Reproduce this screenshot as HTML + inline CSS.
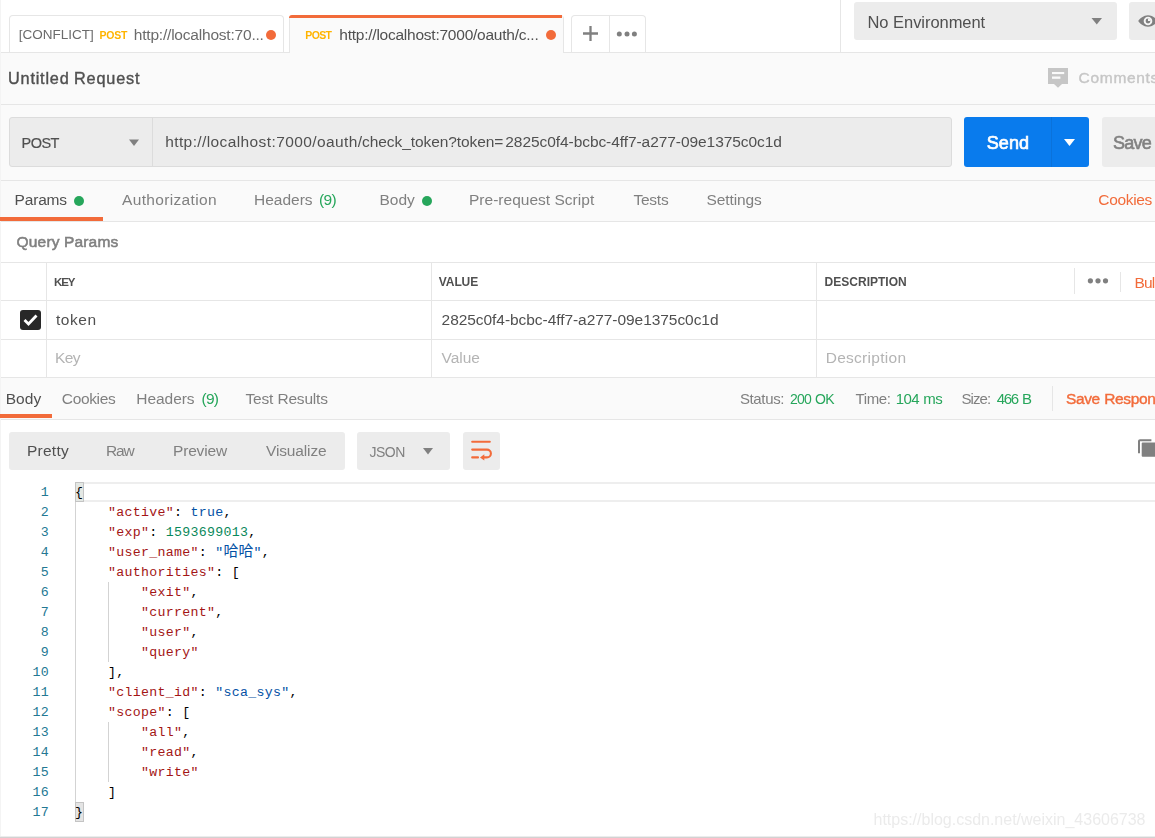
<!DOCTYPE html>
<html lang="en">
<head>
<meta charset="utf-8">
<title>Postman</title>
<style>
html,body{margin:0;padding:0;}
body{width:1155px;height:838px;overflow:hidden;position:relative;background:#fff;font-family:"Liberation Sans","Noto Sans CJK SC",sans-serif;color:#505050;font-size:15px;}
.abs{position:absolute;}
.t{position:absolute;white-space:nowrap;line-height:20px;height:20px;}
.box{position:absolute;box-sizing:border-box;}
.hl{position:absolute;height:1px;background:#e6e6e6;left:0;width:1155px;}
.vl{position:absolute;width:1px;background:#e6e6e6;}
.mono{position:absolute;left:0;top:0.5px;font-family:"Liberation Mono","Noto Sans CJK SC",monospace;font-size:13.25px;letter-spacing:0.3px;}
.ln{position:absolute;left:0;width:49px;text-align:right;color:#237893;height:20px;line-height:20px;white-space:pre;}
.cl{position:absolute;left:75px;height:20px;line-height:20px;white-space:pre;color:#000;}
.k{color:#a31515;}
.s{color:#0451a5;}
.n{color:#09885a;}
</style>
</head>
<body>

<!-- ===== top tab bar ===== -->
<div class="hl" style="top:52px;"></div>
<div class="box" style="left:0;top:53px;width:1155px;height:51px;background:#fafafa;"></div>
<div class="hl" style="top:104px;"></div>

<!-- tab 1 -->
<div class="box" style="left:9px;top:15px;width:275px;height:37px;border:1px solid #e6e6e6;border-bottom:none;border-radius:4px 4px 0 0;background:#fff;"></div>
<div class="box" style="left:266px;top:30px;width:10px;height:10px;border-radius:5px;background:#f26b3a;"></div>

<!-- tab 2 (active) -->
<div class="box" style="left:289px;top:15px;width:275px;height:38px;border:1px solid #e6e6e6;border-top:none;border-bottom:none;border-radius:4px 4px 0 0;background:#fafafa;"></div>
<div class="box" style="left:289px;top:15px;width:273px;height:3px;border-radius:3px 0 0 0;background:#f26b3a;"></div>
<div class="box" style="left:546px;top:30px;width:10px;height:10px;border-radius:5px;background:#f26b3a;"></div>

<!-- plus / more -->
<div class="box" style="left:571px;top:15px;width:75px;height:37px;border:1px solid #e6e6e6;border-bottom:none;border-radius:4px 4px 0 0;background:#fff;"></div>
<div class="vl" style="left:609px;top:16px;height:36px;"></div>
<svg class="abs" style="left:582px;top:25px;" width="17" height="17" viewBox="0 0 17 17"><path d="M8.500 1v15M1 8.500h15" stroke="#808080" stroke-width="2.300" fill="none"/></svg>
<svg class="abs" style="left:615px;top:30px;" width="24" height="8" viewBox="0 0 24 8"><circle cx="4.300" cy="4" r="2.500" fill="#808080"/><circle cx="12" cy="4" r="2.500" fill="#808080"/><circle cx="19.400" cy="4" r="2.500" fill="#808080"/></svg>

<!-- environment -->
<div class="vl" style="left:840px;top:0;height:52px;"></div>
<div class="box" style="left:854px;top:2px;width:263px;height:38px;background:#ececec;border-radius:3px;"></div>
<svg class="abs" style="left:1091px;top:18px;" width="12" height="7" viewBox="0 0 12 7"><path d="M0.500 0h10.500L5.750 6.500z" fill="#808080"/></svg>
<div class="box" style="left:1129px;top:2px;width:40px;height:38px;background:#ececec;border-radius:3px;"></div>
<svg class="abs" style="left:1137.700px;top:14.100px;" width="20" height="14" viewBox="0 0 20 14"><path d="M10 1.300C5.500 1.300 2 4.500 0.200 7c1.800 2.500 5.300 5.700 9.800 5.700s8-3.200 9.800-5.700c-1.800-2.500-5.300-5.700-9.800-5.700z" fill="#808080"/><circle cx="10" cy="7" r="4.300" fill="#f4f4f4"/><circle cx="10" cy="7" r="2.400" fill="#808080"/><path d="M10 7l0-2.400a2.400 2.400 0 0 1 2.400 2.400z" fill="#f4f4f4"/></svg>

<!-- title row -->
<svg class="abs" style="left:1048px;top:68px;" width="20" height="20" viewBox="0 0 20 20"><path d="M0 0h20v16.100h-6l-4 3.700-4-3.700h-6z" fill="#c6c6c6"/><rect x="4" y="4" width="12.200" height="2.100" fill="#fafafa"/><rect x="4" y="8.500" width="8.400" height="2.300" fill="#fafafa"/></svg>

<!-- ===== url bar ===== -->
<div class="box" style="left:0;top:105px;width:1155px;height:75px;background:#fafafa;"></div>
<div class="box" style="left:9px;top:117px;width:943px;height:50px;background:#ececec;border:1px solid #dcdcdc;border-radius:3px;"></div>
<div class="vl" style="left:152px;top:118px;height:48px;background:#dcdcdc;"></div>
<svg class="abs" style="left:129px;top:139px;" width="10" height="7" viewBox="0 0 10 7"><path d="M0 0.500h10L5 7z" fill="#808080"/></svg>
<div class="box" style="left:964px;top:117px;width:125px;height:50px;background:#097bed;border-radius:3px;"></div>
<div class="vl" style="left:1051px;top:117px;height:50px;background:#0a72db;"></div>
<svg class="abs" style="left:1064px;top:139px;" width="11" height="7" viewBox="0 0 11 7"><path d="M0 0h11L5.500 7z" fill="#fff"/></svg>
<div class="box" style="left:1102px;top:117px;width:70px;height:50px;background:#ececec;border-radius:3px;"></div>
<div class="hl" style="top:180px;"></div>

<!-- ===== request tabs ===== -->
<div class="box" style="left:0;top:181px;width:1155px;height:40px;background:#fafafa;"></div>
<div class="hl" style="top:221px;"></div>
<div class="box" style="left:74px;top:195.800px;width:10px;height:10px;border-radius:50%;background:#26a65b;"></div>
<div class="box" style="left:422px;top:195.800px;width:10px;height:10px;border-radius:50%;background:#26a65b;"></div>

<!-- ===== query params ===== -->
<div class="hl" style="top:262px;"></div>
<div class="hl" style="top:300px;"></div>
<div class="hl" style="top:339px;"></div>
<div class="hl" style="top:377px;"></div>
<div class="vl" style="left:0;top:262px;height:116px;"></div>
<div class="vl" style="left:46px;top:262px;height:116px;"></div>
<div class="vl" style="left:431px;top:262px;height:116px;"></div>
<div class="vl" style="left:816px;top:262px;height:116px;"></div>
<div class="vl" style="left:1074px;top:268px;height:26px;"></div>
<div class="vl" style="left:1120px;top:272px;height:20px;"></div>
<svg class="abs" style="left:1086px;top:276px;" width="24" height="10" viewBox="0 0 24 10"><circle cx="4.400" cy="4.800" r="2.600" fill="#808080"/><circle cx="12" cy="4.800" r="2.600" fill="#808080"/><circle cx="19.500" cy="4.800" r="2.600" fill="#808080"/></svg>
<div class="box" style="left:20px;top:309.500px;width:21px;height:20.500px;border-radius:3px;background:#282828;"></div>
<svg class="abs" style="left:20px;top:309px;" width="21" height="21" viewBox="0 0 21 21"><path d="M4.500 11l4 4 8-8.500" stroke="#fff" stroke-width="2.800" fill="none"/></svg>

<!-- ===== response tabs ===== -->
<div class="box" style="left:0;top:378px;width:1155px;height:41px;background:#fafafa;"></div>
<div class="hl" style="top:419px;"></div>
<div class="vl" style="left:1052px;top:386px;height:25px;"></div>

<!-- ===== response toolbar ===== -->
<div class="box" style="left:9px;top:432px;width:336px;height:38px;background:#ececec;border-radius:3px;"></div>
<div class="box" style="left:357px;top:432px;width:93px;height:38px;background:#ececec;border-radius:3px;"></div>
<svg class="abs" style="left:423px;top:448px;" width="10" height="7" viewBox="0 0 10 7"><path d="M0 0h10L5 6.600z" fill="#808080"/></svg>
<div class="box" style="left:463px;top:432px;width:37px;height:38px;background:#ececec;border-radius:3px;"></div>
<svg class="abs" style="left:470px;top:440px;" width="23" height="22" viewBox="0 0 23 22"><path d="M2.200 1.800h17.600M2.200 9.600h14.800a3.900 3.900 0 0 1 0 7.800h-3M2.200 17.400h5.800" stroke="#f26b3a" stroke-width="2.100" stroke-linecap="round" fill="none"/><path d="M14.300 14.300v6.200l-4.300-3.100z" fill="#f26b3a"/></svg>
<svg class="abs" style="left:1137px;top:438px;" width="20" height="20" viewBox="0 0 20 20"><path d="M2 15.200V3.200a1 1 0 0 1 1-1H14.400" fill="none" stroke="#808080" stroke-width="2"/><rect x="4.700" y="4.500" width="16" height="14.200" rx="1" fill="#808080"/></svg>

<!-- ===== code ===== -->
<div class="box" style="left:75px;top:482px;width:1080px;height:20px;border-top:2px solid #eee;border-bottom:2px solid #eee;"></div>
<div class="vl" style="left:75px;top:482px;height:340px;background:#d3d3d3;"></div>
<div class="vl" style="left:108px;top:582px;height:80px;background:#d3d3d3;"></div>
<div class="vl" style="left:108px;top:722px;height:60px;background:#d3d3d3;"></div>
<div class="box" style="left:75px;top:482px;width:9px;height:20px;background:#e4e8e4;border:1px solid #c4c4c4;"></div>
<div class="box" style="left:75px;top:802px;width:9px;height:20px;background:#e4e4e4;border:1px solid #c4c4c4;"></div>

<div class="mono">
<div class="ln" style="top:482px;">1</div><div class="cl" style="top:482px;">{</div>
<div class="ln" style="top:502px;">2</div><div class="cl" style="top:502px;">    <span class="k">"active"</span>: <span class="s">true</span>,</div>
<div class="ln" style="top:522px;">3</div><div class="cl" style="top:522px;">    <span class="k">"exp"</span>: <span class="n">1593699013</span>,</div>
<div class="ln" style="top:542px;">4</div><div class="cl" style="top:542px;">    <span class="k">"user_name"</span>: <span class="s">"<span style="font-size:15px;letter-spacing:0;">哈哈</span>"</span>,</div>
<div class="ln" style="top:562px;">5</div><div class="cl" style="top:562px;">    <span class="k">"authorities"</span>: [</div>
<div class="ln" style="top:582px;">6</div><div class="cl" style="top:582px;">        <span class="k">"exit"</span>,</div>
<div class="ln" style="top:602px;">7</div><div class="cl" style="top:602px;">        <span class="k">"current"</span>,</div>
<div class="ln" style="top:622px;">8</div><div class="cl" style="top:622px;">        <span class="k">"user"</span>,</div>
<div class="ln" style="top:642px;">9</div><div class="cl" style="top:642px;">        <span class="k">"query"</span></div>
<div class="ln" style="top:662px;">10</div><div class="cl" style="top:662px;">    ],</div>
<div class="ln" style="top:682px;">11</div><div class="cl" style="top:682px;">    <span class="k">"client_id"</span>: <span class="s">"sca_sys"</span>,</div>
<div class="ln" style="top:702px;">12</div><div class="cl" style="top:702px;">    <span class="k">"scope"</span>: [</div>
<div class="ln" style="top:722px;">13</div><div class="cl" style="top:722px;">        <span class="k">"all"</span>,</div>
<div class="ln" style="top:742px;">14</div><div class="cl" style="top:742px;">        <span class="k">"read"</span>,</div>
<div class="ln" style="top:762px;">15</div><div class="cl" style="top:762px;">        <span class="k">"write"</span></div>
<div class="ln" style="top:782px;">16</div><div class="cl" style="top:782px;">    ]</div>
<div class="ln" style="top:802px;">17</div><div class="cl" style="top:802px;">}</div>
</div>

<div class="box" style="left:0;top:0;width:1px;height:838px;background:#f4f4f4;"></div>
<div class="box" style="left:0;top:217px;width:103px;height:4px;background:#f26b3a;"></div>
<div class="box" style="left:0;top:414px;width:52px;height:4px;background:#f26b3a;"></div>
<!-- texts -->
<div id="ui" style="position:absolute;left:0;top:0;width:1155px;height:838px;will-change:transform;">
<div class="t" style="left:18.80px;top:25.32px;font-size:13.5px;color:#6b6b6b;letter-spacing:-0.017px;">[CONFLICT]</div>
<div class="t" style="left:99.60px;top:25.26px;font-size:10.5px;color:#ffb400;letter-spacing:-0.291px;font-weight:bold;">POST</div>
<div class="t" style="left:133.80px;top:24.63px;font-size:15.5px;color:#6b6b6b;letter-spacing:-0.205px;">http://localhost:70...</div>
<div class="t" style="left:305.30px;top:25.26px;font-size:10.5px;color:#ffb400;letter-spacing:-0.658px;font-weight:bold;">POST</div>
<div class="t" style="left:339.30px;top:24.63px;font-size:15.5px;color:#505050;letter-spacing:-0.239px;">http://localhost:7000/oauth/c...</div>
<div class="t" style="left:867.50px;top:11.58px;font-size:16.5px;color:#505050;letter-spacing:-0.052px;word-spacing:0.052px;">No Environment</div>
<div class="t" style="left:8.00px;top:68.37px;font-size:16.25px;color:#505050;letter-spacing:0.806px;word-spacing:-0.806px;-webkit-text-stroke:0.4px #505050;">Untitled Request</div>
<div class="t" style="left:1078.60px;top:68.33px;font-size:15.5px;color:#c6c6c6;letter-spacing:0.687px;-webkit-text-stroke:0.4px #c6c6c6;">Comments</div>
<div class="t" style="left:21.60px;top:132.68px;font-size:14.5px;color:#505050;letter-spacing:-0.574px;-webkit-text-stroke:0.2px #505050;">POST</div>
<div class="t" style="left:165.20px;top:132.43px;font-size:15.5px;color:#505050;letter-spacing:0.396px;">http://localhost:7000/oauth</div>
<div class="t" style="left:357.80px;top:132.43px;font-size:15.5px;color:#505050;letter-spacing:-0.076px;">/check_token?token=</div>
<div class="t" style="left:505.30px;top:132.43px;font-size:15.5px;color:#505050;letter-spacing:-0.066px;">2825c0f4-bcbc-4ff7-a277-09e1375c0c1d</div>
<div class="t" style="left:986.80px;top:132.96px;font-size:18px;color:#ffffff;letter-spacing:0.058px;-webkit-text-stroke:0.7px #ffffff;">Send</div>
<div class="t" style="left:1113.00px;top:132.96px;font-size:18px;color:#808080;letter-spacing:-0.772px;-webkit-text-stroke:0.6px #808080;">Save</div>
<div class="t" style="left:14.60px;top:190.23px;font-size:15.5px;color:#505050;letter-spacing:-0.190px;">Params</div>
<div class="t" style="left:122.00px;top:190.23px;font-size:15.5px;color:#808080;letter-spacing:0.337px;">Authorization</div>
<div class="t" style="left:254.00px;top:190.23px;font-size:15.5px;color:#808080;letter-spacing:-0.006px;">Headers</div>
<div class="t" style="left:319.00px;top:190.23px;font-size:15.5px;color:#26a65b;letter-spacing:-0.691px;">(9)</div>
<div class="t" style="left:379.60px;top:190.23px;font-size:15.5px;color:#808080;letter-spacing:-0.060px;">Body</div>
<div class="t" style="left:469.00px;top:190.23px;font-size:15.5px;color:#808080;letter-spacing:0.019px;word-spacing:-0.019px;">Pre-request Script</div>
<div class="t" style="left:633.40px;top:190.23px;font-size:15.5px;color:#808080;letter-spacing:-0.232px;">Tests</div>
<div class="t" style="left:706.60px;top:190.23px;font-size:15.5px;color:#808080;letter-spacing:-0.122px;">Settings</div>
<div class="t" style="left:1098.30px;top:190.23px;font-size:15.5px;color:#f26b3a;letter-spacing:-0.325px;">Cookies</div>
<div class="t" style="left:16.60px;top:232.13px;font-size:15.5px;color:#808080;letter-spacing:0.173px;word-spacing:-0.173px;-webkit-text-stroke:0.55px #808080;">Query Params</div>
<div class="t" style="left:54.00px;top:272.12px;font-size:11.5px;color:#505050;letter-spacing:-1.088px;font-weight:bold;">KEY</div>
<div class="t" style="left:438.80px;top:271.94px;font-size:12px;color:#505050;letter-spacing:-0.094px;font-weight:bold;">VALUE</div>
<div class="t" style="left:824.60px;top:271.94px;font-size:12px;color:#505050;letter-spacing:0.006px;font-weight:bold;">DESCRIPTION</div>
<div class="t" style="left:1134.50px;top:272.63px;font-size:15.5px;color:#f26b3a;letter-spacing:-0.838px;word-spacing:0.838px;">Bulk Edit</div>
<div class="t" style="left:56.00px;top:309.93px;font-size:15.5px;color:#505050;letter-spacing:0.526px;">token</div>
<div class="t" style="left:441.60px;top:309.93px;font-size:15.5px;color:#505050;letter-spacing:-0.057px;">2825c0f4-bcbc-4ff7-a277-09e1375c0c1d</div>
<div class="t" style="left:55.00px;top:347.63px;font-size:15.5px;color:#b4b4b4;letter-spacing:-0.579px;">Key</div>
<div class="t" style="left:441.60px;top:347.63px;font-size:15.5px;color:#b4b4b4;letter-spacing:-0.043px;">Value</div>
<div class="t" style="left:825.70px;top:347.63px;font-size:15.5px;color:#b4b4b4;letter-spacing:0.279px;">Description</div>
<div class="t" style="left:5.70px;top:389.03px;font-size:15.5px;color:#505050;letter-spacing:0.074px;">Body</div>
<div class="t" style="left:61.80px;top:389.03px;font-size:15.5px;color:#808080;letter-spacing:-0.341px;">Cookies</div>
<div class="t" style="left:136.30px;top:389.03px;font-size:15.5px;color:#808080;letter-spacing:-0.056px;">Headers</div>
<div class="t" style="left:201.50px;top:389.03px;font-size:15.5px;color:#26a65b;letter-spacing:-0.741px;">(9)</div>
<div class="t" style="left:245.50px;top:389.03px;font-size:15.5px;color:#808080;letter-spacing:-0.197px;word-spacing:0.197px;">Test Results</div>
<div class="t" style="left:739.90px;top:388.80px;font-size:15px;color:#808080;letter-spacing:-0.354px;">Status:</div>
<div class="t" style="left:790.00px;top:389.15px;font-size:14px;color:#26a65b;letter-spacing:-0.734px;word-spacing:0.734px;">200 OK</div>
<div class="t" style="left:855.50px;top:388.80px;font-size:15px;color:#808080;letter-spacing:-0.394px;">Time:</div>
<div class="t" style="left:895.70px;top:388.80px;font-size:15px;color:#26a65b;letter-spacing:-0.522px;word-spacing:0.522px;">104 ms</div>
<div class="t" style="left:961.40px;top:388.80px;font-size:15px;color:#808080;letter-spacing:-0.895px;">Size:</div>
<div class="t" style="left:996.70px;top:388.80px;font-size:15px;color:#26a65b;letter-spacing:-1.298px;word-spacing:1.298px;">466 B</div>
<div class="t" style="left:1065.90px;top:388.63px;font-size:15.5px;color:#f26b3a;letter-spacing:-0.340px;word-spacing:0.340px;-webkit-text-stroke:0.4px #f26b3a;">Save Response</div>
<div class="t" style="left:26.90px;top:441.43px;font-size:15.5px;color:#505050;letter-spacing:0.273px;">Pretty</div>
<div class="t" style="left:106.00px;top:441.43px;font-size:15.5px;color:#808080;letter-spacing:-1.157px;">Raw</div>
<div class="t" style="left:173.00px;top:441.43px;font-size:15.5px;color:#808080;letter-spacing:-0.172px;">Preview</div>
<div class="t" style="left:266.00px;top:441.43px;font-size:15.5px;color:#808080;letter-spacing:-0.141px;">Visualize</div>
<div class="t" style="left:369.60px;top:442.15px;font-size:14px;color:#808080;letter-spacing:-0.543px;">JSON</div>
<div class="t" style="left:873.50px;top:809.86px;font-size:16px;color:#ebebeb;letter-spacing:-0.005px;">https://blog.csdn.net/weixin_43606738</div>
</div>

<div class="box" style="left:0;top:836px;width:1155px;height:1px;background:#ececec;"></div>
<div class="box" style="left:0;top:837px;width:1155px;height:1px;background:#d2d2d2;"></div>

</body>
</html>
